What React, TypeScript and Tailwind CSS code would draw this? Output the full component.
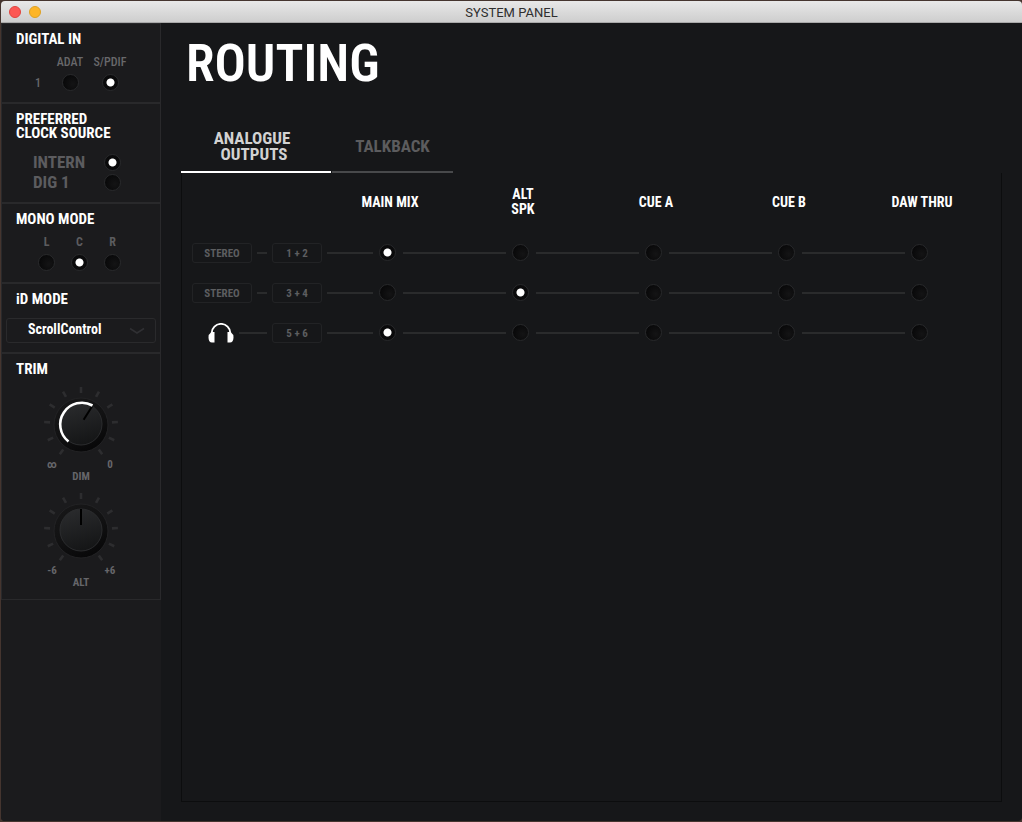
import { useState, type ReactNode } from 'react';

const NARROW = "font-['Roboto_Condensed','Liberation_Sans_Narrow','Liberation_Sans',sans-serif]";

type RadioProps = {
  name: string;
  label: string;
  checked: boolean;
  onChange: () => void;
  id?: string;
};

function Radio({ name, label, checked, onChange, id }: RadioProps) {
  return (
    <input
      type="radio"
      id={id}
      name={name}
      aria-label={label}
      checked={checked}
      onChange={onChange}
      className="block size-[17px] shrink-0 appearance-none rounded-full border border-[#28292b] bg-[radial-gradient(circle_at_65%_60%,#141415_0,#080809_75%)] checked:bg-[radial-gradient(circle_at_50%_50%,#fff_0,#fff_3.5px,#0a0a0b_4.5px)]"
    />
  );
}

function Panel({ title, children }: { title: ReactNode; children: ReactNode }) {
  return (
    <section className="border border-[#29292b]">
      <h2 className="px-[14px] pt-2 text-[15px] leading-[14px] font-bold text-white">{title}</h2>
      {children}
    </section>
  );
}

const TICKS = [-145, -116, -87, -58, -29, 0, 29, 58, 87, 116, 145];

type KnobProps = { label: string; min: string; max: string; angle: number; arc?: boolean; id: string };

function Knob({ label, min, max, angle, arc, id }: KnobProps) {
  return (
    <div className="flex h-[106px] flex-col items-center">
      <svg viewBox="0 1 80 74" className="h-[74px] w-20" role="img" aria-label={label}>
        <defs>
          <linearGradient id={`${id}-well`} x1="0.2" y1="0" x2="0.7" y2="1">
            <stop offset="0" stopColor="#171718" />
            <stop offset="0.5" stopColor="#121213" />
            <stop offset="1" stopColor="#070708" />
          </linearGradient>
          <linearGradient id={`${id}-cap`} x1="0.3" y1="0" x2="0.6" y2="1">
            <stop offset="0" stopColor="#2a2b2d" />
            <stop offset="1" stopColor="#141516" />
          </linearGradient>
        </defs>
        {TICKS.map((t) => (
          <path key={t} d="M40 3v6" stroke="#2d2d2f" strokeWidth="2.600" transform={`rotate(${t} 40 40)`} />
        ))}
        <circle cx="40" cy="41" r="27" fill={`url(#${id}-well)`} stroke="#222224" />
        <circle cx="40" cy="40" r="21" fill={`url(#${id}-cap)`} stroke="#2b2c2e" />
        <path d="M40 19v16" stroke="#000" strokeWidth="2" transform={`rotate(${angle} 40 40)`} />
        {arc && <path d="M27.500 57.500A21.700 21.700 0 0 1 51.500 21.500" fill="none" stroke="#fff" strokeWidth="2.600" />}
      </svg>
      <div className="flex w-[74px] justify-between text-[11px] leading-[12px] font-bold text-[#66666a]">
        <span className="w-4 text-center">{min}</span>
        <span className="w-4 text-center">{max}</span>
      </div>
      <span className="text-[11px] leading-[12px] font-bold text-[#66666a]">{label}</span>
    </div>
  );
}

function Headphones() {
  return (
    <svg viewBox="0 0 26 20" className="h-5 w-[26px]" fill="#fff" role="img" aria-label="Headphones">
      <path d="M3.700 11V10a9.300 9.100 0 0 1 18.600 0V11" fill="none" stroke="#fff" strokeWidth="1.900" />
      <path d="M6.500 9V19.500H4C1.800 19.500.5 17.500.5 14.500Q.5 11 3 9.500V9z" />
      <path d="M19.500 9V19.500H22c2.200 0 3.500-2 3.500-5Q25.500 11 23 9.500V9z" />
    </svg>
  );
}

const OUTPUTS = ['MAIN MIX', 'ALT SPK', 'CUE A', 'CUE B', 'DAW THRU'];
const ROWS = [
  { kind: 'STEREO', pair: '1 + 2' },
  { kind: 'STEREO', pair: '3 + 4' },
  { kind: 'PHONES', pair: '5 + 6' },
];

function Line() {
  return <span className="h-0.5 flex-1 bg-[#2a2b2c]" />;
}

function RoutingTable() {
  const [routes, setRoutes] = useState([0, 1, 0]);
  return (
    <table className="w-full table-fixed border-collapse">
      <colgroup>
        <col className="w-[140px]" />
        <col className="w-[81px]" />
        <col />
        <col />
        <col />
        <col />
      </colgroup>
      <thead>
        <tr className="h-[60px] text-[14px] leading-[15px] text-white">
          <td />
          {OUTPUTS.map((o) => (
            <th key={o} scope="col" className="p-0 pb-0.5 font-bold">
              <div className="flex justify-end">
                <div className="flex w-[30px] justify-center whitespace-nowrap pl-1">
                  {o === 'ALT SPK' ? <span>ALT<br />SPK</span> : <span>{o}</span>}
                </div>
              </div>
            </th>
          ))}
        </tr>
      </thead>
      <tbody>
        {ROWS.map((row, r) => (
          <tr key={row.pair} className="h-10">
            <th scope="row" className="p-0 text-[11px] font-bold text-[#5d5e60]">
              <div className="flex items-center gap-[5px] pl-[10px]">
                {row.kind === 'STEREO' ? (
                  <span className="h-5 w-[60px] rounded-[3px] border border-[#222325] text-center leading-[19px]">STEREO</span>
                ) : (
                  <span className="flex w-[42px] justify-end"><Headphones /></span>
                )}
                <Line />
                <span className="h-5 w-[50px] rounded-[3px] border border-[#222325] text-center leading-[19px]">
                  {row.pair}
                </span>
              </div>
            </th>
            {OUTPUTS.map((o, c) => (
              <td key={o} className="p-0">
                <div className={c === 0 ? 'flex items-center pl-[5px]' : 'flex items-center'}>
                  <Line />
                  <div className="flex w-[30px] justify-center pr-0.5 pb-px">
                    <Radio
                      name={`route-${r}`}
                      label={`${row.pair} to ${o}`}
                      checked={routes[r] === c}
                      onChange={() => setRoutes(routes.map((v, i) => (i === r ? c : v)))}
                    />
                  </div>
                </div>
              </td>
            ))}
          </tr>
        ))}
      </tbody>
    </table>
  );
}

export default function App() {
  const [digital, setDigital] = useState('S/PDIF');
  const [clock, setClock] = useState('INTERN');
  const [mono, setMono] = useState('C');

  return (
    <div className={`${NARROW} flex min-h-screen flex-col bg-[#45352f] pt-px pb-px pl-px`}>
      <header className="flex h-[22px] items-center rounded-t-[4px] border-b border-[#a9a9a9] bg-linear-to-b from-[#e8e8e8] to-[#cecece] px-2">
        <div className="flex flex-1 gap-2">
          <button aria-label="Close" className="size-3 rounded-full border border-[#e0443e] bg-[#fc5753]" />
          <button aria-label="Minimize" className="size-3 rounded-full border border-[#dea123] bg-[#fdb527]" />
        </div>
        <h1 className="pt-0.5 font-[Roboto,sans-serif] text-[13px] leading-5 text-[#2e2e2e]">SYSTEM PANEL</h1>
        <div className="flex-1" />
      </header>

      <div className="flex flex-1 overflow-hidden rounded-b-[4px] bg-[#161719]">
        <aside className="w-40 shrink-0 bg-[#1b1b1d]">
          <Panel title="DIGITAL IN">
            <div className="grid h-14 grid-cols-[24px_40px_40px] content-start items-center justify-start gap-y-1 pt-2 pl-6 text-[12px] leading-[16px] font-medium text-[#68686b]">
              <span />
              <label htmlFor="in-adat" className="text-center">ADAT</label>
              <label htmlFor="in-spdif" className="text-center">S/PDIF</label>
              <span className="text-center">1</span>
              <div className="flex justify-center">
                <Radio id="in-adat" name="digital" label="ADAT" checked={digital === 'ADAT'} onChange={() => setDigital('ADAT')} />
              </div>
              <div className="flex justify-center">
                <Radio id="in-spdif" name="digital" label="S/PDIF" checked={digital === 'S/PDIF'} onChange={() => setDigital('S/PDIF')} />
              </div>
            </div>
          </Panel>

          <Panel title={<>PREFERRED<br />CLOCK SOURCE</>}>
            <div className="flex h-[62px] flex-col pt-3 pr-[39px] pl-[31px] text-[17px] leading-5 font-bold text-[#5c5c5f]">
              {[['INTERN', 'clk-int'], ['DIG 1', 'clk-dig']].map(([name, id]) => (
                <div key={id} className="flex items-center justify-between">
                  <label htmlFor={id}>{name}</label>
                  <Radio id={id} name="clock" label={name} checked={clock === name} onChange={() => setClock(name)} />
                </div>
              ))}
            </div>
          </Panel>

          <Panel title="MONO MODE">
            <div className="flex h-14 pt-2 pl-[28px] text-[12px] leading-4 font-bold text-[#5c5c5f]">
              {['L', 'C', 'R'].map((m) => (
                <div key={m} className="flex w-[33px] flex-col items-center gap-1">
                  <label htmlFor={`mono-${m}`}>{m}</label>
                  <Radio id={`mono-${m}`} name="mono" label={m} checked={mono === m} onChange={() => setMono(m)} />
                </div>
              ))}
            </div>
          </Panel>

          <Panel title="iD MODE">
            <div className="relative px-1 pt-3 pb-[9px]">
              <select aria-label="iD mode" className="block h-[25px] w-full appearance-none rounded-[3px] border border-[#2a2a2c] bg-transparent pr-8 pb-1 pl-[21px] text-[14px] leading-5 font-bold text-white">
                <option>ScrollControl</option>
              </select>
              <svg viewBox="0 0 16 8" className="pointer-events-none absolute top-[21px] right-[15px] h-2 w-4" fill="none" stroke="#303033" strokeWidth="1.500">
                <path d="M1 1.500L8 6l7-4.500" />
              </svg>
            </div>
          </Panel>

          <Panel title="TRIM">
            <div className="flex h-[223px] flex-col pt-[9px]">
              <Knob id="dim" label="DIM" min="∞" max="0" angle={32} arc />
              <Knob id="alt" label="ALT" min="-6" max="+6" angle={0} />
            </div>
          </Panel>
        </aside>

        <main className="flex min-w-0 flex-1 flex-col px-5 pb-[19px]">
          <h2 className="pt-[13px] pl-[5px] text-[52px] leading-[56px] font-semibold text-white">ROUTING</h2>
          <div role="tablist" className="mt-7 flex items-end gap-px text-[17px] leading-4 font-bold">
            <button role="tab" aria-selected="true" className="h-[53px] w-[150px] border-b-2 border-white pr-2 text-[#d2d2d2]">
              <span className="block">ANALOGUE</span>
              <span className="block pl-1">OUTPUTS</span>
            </button>
            <button role="tab" aria-selected="false" className="h-[53px] w-[121px] border-b-2 border-[#48494b] text-[#5c5c5e]">
              TALKBACK
            </button>
          </div>
          <section className="flex-1 border border-t-0 border-[#0c0d0e] pr-[66px]">
            <RoutingTable />
          </section>
        </main>
      </div>
    </div>
  );
}
